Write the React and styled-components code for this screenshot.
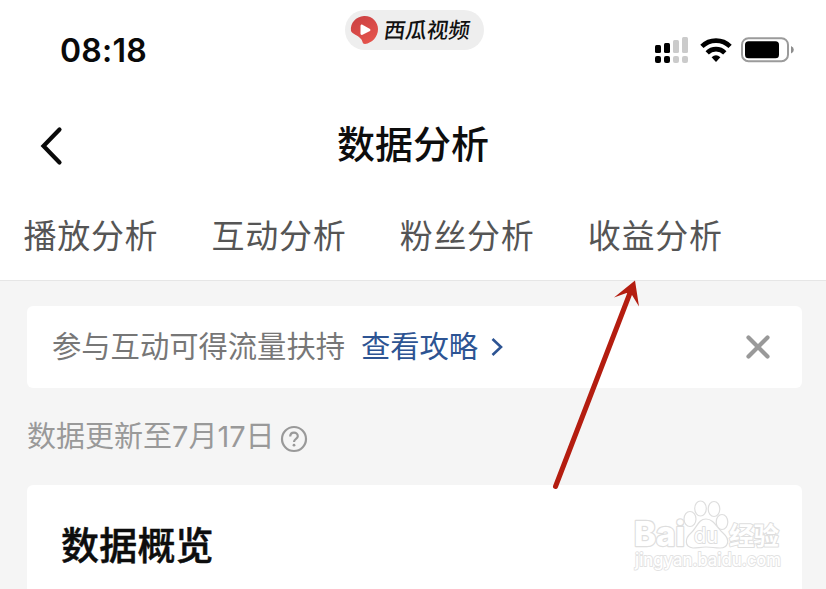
import React from "react";
import styled, { createGlobalStyle } from "styled-components";

const tabs = ["播放分析", "互动分析", "粉丝分析", "收益分析"];

export default function App() {
  return (
    <>
      <GlobalStyle />
      <Page>
        <StatusBar>
          <Time>08:18</Time>
          <AppPill>
            <AppLogo />
            <AppName>西瓜视频</AppName>
          </AppPill>
          <StatusIcons>
            <SignalIcon />
            <WifiIcon />
            <BatteryIcon />
          </StatusIcons>
        </StatusBar>

        <NavBar>
          <BackButton aria-label="返回">
            <svg width="24" height="40" viewBox="0 0 24 40">
              <path d="M20.5 3.5 L4.5 20 L20.5 36.5" fill="none" stroke="#0a0a0a" strokeWidth="4.2" strokeLinecap="round" />
            </svg>
          </BackButton>
          <Title>数据分析</Title>
        </NavBar>

        <Tabs>
          {tabs.map((label) => (
            <Tab key={label}>{label}</Tab>
          ))}
        </Tabs>

        <Content>
          <Notice>
            <NoticeText>参与互动可得流量扶持</NoticeText>
            <NoticeLink>
              查看攻略
              <svg width="12" height="20" viewBox="0 0 12 20">
                <path d="M1.5 2 L10 10 L1.5 18" fill="none" stroke="#2d5493" strokeWidth="2.6" />
              </svg>
            </NoticeLink>
            <CloseButton aria-label="关闭">
              <svg width="26" height="26" viewBox="0 0 26 26">
                <path d="M3.5 3.5 L22.5 22.5 M22.5 3.5 L3.5 22.5" stroke="#999" strokeWidth="4.2" strokeLinecap="round" />
              </svg>
            </CloseButton>
          </Notice>

          <UpdateRow>
            <span>数据更新至7月17日</span>
            <HelpIcon />
          </UpdateRow>

          <Card>
            <CardTitle>数据概览</CardTitle>
          </Card>
        </Content>

        <Arrow />
        <Watermark />
      </Page>
    </>
  );
}

function AppLogo() {
  return (
    <svg width="30" height="30" viewBox="0 0 30 30">
      <defs>
        <linearGradient id="logo" x1="0" y1="0" x2="0.6" y2="1">
          <stop offset="0" stopColor="#c93f42" />
          <stop offset="1" stopColor="#e4534c" />
        </linearGradient>
      </defs>
      <path
        d="M14 1 C22 .5 28 7 28 14 C28 22 22 28 15 29 C12 29 13 26 11 24 C8 20 2 19 1 16 C0 8 6 1.5 14 1 Z"
        fill="url(#logo)"
      />
      <path d="M12 9.5 L20 14 Q21 15 20 16 L12 20 Q10.5 20 10.5 18.5 L10.5 11 Q10.5 9 12 9.5 Z" fill="#fff" />
    </svg>
  );
}

function SignalIcon() {
  return (
    <svg width="34" height="28" viewBox="0 0 34 28">
      <g fill="#000">
        <rect x="0" y="9" width="6" height="8" rx="1.5" />
        <rect x="9" y="7" width="6" height="10" rx="1.5" />
        <rect x="0" y="20" width="6" height="7" rx="2" />
        <rect x="9" y="20" width="6" height="7" rx="2" />
      </g>
      <g fill="#cbcbcb">
        <rect x="18" y="4" width="6" height="13" rx="1.5" />
        <rect x="27" y="1" width="6" height="16" rx="1.5" />
        <rect x="18" y="20" width="6" height="7" rx="2" />
        <rect x="27" y="20" width="6" height="7" rx="2" />
      </g>
    </svg>
  );
}

function WifiIcon() {
  return (
    <svg width="32" height="24" viewBox="0 0 32 24">
      <g fill="none" stroke="#000" strokeWidth="4.6">
        <path d="M1.9 8.4 A20 20 0 0 1 30.1 8.4" />
        <path d="M7.2 14.8 A12.3 12.3 0 0 1 24.8 14.8" />
      </g>
      <path d="M11.6 19.3 Q16 15.4 20.4 19.3 L16 24 Z" fill="#000" />
    </svg>
  );
}

function BatteryIcon() {
  return (
    <svg width="53" height="26" viewBox="0 0 53 26">
      <rect x="1" y="1.2" width="46" height="23" rx="6.5" fill="#fff" stroke="#9b9b9b" strokeWidth="2" />
      <rect x="4" y="4.2" width="34" height="17" rx="3.5" fill="#000" />
      <path d="M50 9 Q52.8 10 52.8 12.8 Q52.8 15.6 50 16.6 Z" fill="#8d8d8d" />
    </svg>
  );
}

function HelpIcon() {
  return (
    <svg width="28" height="28" viewBox="0 0 28 28" fill="none" stroke="#999" strokeWidth="2.2">
      <circle cx="14" cy="14" r="12" />
      <path d="M10.2 11.6 C10.2 6.2 17.8 6.4 17.8 11.2 C17.8 14 14 13.9 14 17" />
      <circle cx="14" cy="20.2" r="1.4" fill="#999" stroke="none" />
    </svg>
  );
}

function Arrow() {
  return (
    <ArrowSvg width="120" height="235" viewBox="0 0 120 235">
      <path d="M15.5 221.5 L90 28" stroke="#b41d10" strokeWidth="5" strokeLinecap="round" />
      <path d="M95 15.5 L99 41.5 L92 30 L86.5 28 L74 32.5 Z" fill="#b41d10" />
    </ArrowSvg>
  );
}

// Outlined paw logo with the site address under it
function Watermark() {
  return (
    <WatermarkSvg width="170" height="80" viewBox="0 0 170 80">
      <g fill="#fff" stroke="#dedede" strokeWidth="1.2">
        <text x="4" y="46" fontSize="34" fontWeight="800" strokeWidth="2.4" textLength="51" lengthAdjust="spacingAndGlyphs">Bai</text>
        <ellipse cx="60" cy="19" rx="6" ry="7.5" />
        <ellipse cx="70.5" cy="8.5" rx="5.8" ry="7.5" />
        <ellipse cx="84" cy="9" rx="5.8" ry="7.5" />
        <ellipse cx="92" cy="22" rx="5.8" ry="7.5" />
        <path d="M76 19 C84 19 87 28 93 33 C101 40 98 48 90 48 C84 48 82 47 76 47 C70 47 68 48 63 48 C54 47 55 38 61 33 C67 28 68 19 76 19 Z" />
        <text x="64" y="42.5" fontSize="22" strokeWidth="2" textLength="24" lengthAdjust="spacingAndGlyphs">du</text>
        <text x="99" y="45" fontSize="25.5" fontWeight="700" strokeWidth="2" textLength="50">经验</text>
        <text x="5" y="66" fontSize="18" fontWeight="500" stroke="#e2e2e2" strokeWidth="1.8" textLength="146" lengthAdjust="spacingAndGlyphs">
          jingyan.baidu.com
        </text>
      </g>
    </WatermarkSvg>
  );
}

const GlobalStyle = createGlobalStyle`
  body {
    margin: 0;
    background: #f5f5f5;
    overflow: hidden;
  }
`;

const Page = styled.div`
  position: relative;
  box-sizing: border-box;
  width: 826px;
  height: 589px;
  overflow: hidden;
  display: flex;
  flex-direction: column;
  background: #fff;
  font-family: Inter, "Noto Sans CJK SC", sans-serif;
`;

const StatusBar = styled.div`
  display: grid;
  grid-template-columns: 345px 139px 1fr;
  height: 100px;
`;

const Time = styled.div`
  padding-left: 60px;
  font-size: 32px;
  line-height: 101px;
  font-weight: 600;
  letter-spacing: 0.2px;
  color: #0a0a0a;
`;

const AppPill = styled.div`
  display: flex;
  align-items: center;
  gap: 4px;
  box-sizing: border-box;
  height: 40px;
  margin-top: 10px;
  padding-left: 5px;
  border-radius: 20px;
  background: #eee;
`;

const AppName = styled.span`
  font-size: 21.5px;
  line-height: 38px;
  font-weight: 500;
  color: #111;
  white-space: nowrap;
  transform: skewX(-8deg);
`;

const StatusIcons = styled.div`
  display: flex;
  align-items: center;
  justify-content: flex-end;
  height: 100px;
  padding-right: 32px;

  svg:nth-child(2) {
    margin: 0 9px 0 11px;
  }
`;

const NavBar = styled.div`
  display: grid;
  grid-template-columns: 1fr auto 1fr;
  align-items: center;
  height: 90px;
`;

const BackButton = styled.button`
  justify-self: start;
  margin-left: 39px;
  padding: 2px 0 0;
  border: none;
  background: none;

  svg {
    display: block;
  }
`;

const Title = styled.h1`
  margin: 0;
  padding-bottom: 3px;
  font-size: 38px;
  line-height: 84px;
  font-weight: 500;
  color: #0d0d0d;
`;

const Tabs = styled.div`
  display: flex;
  gap: 53.3px;
  box-sizing: border-box;
  height: 91px;
  padding-left: 23.5px;
  border-bottom: 1px solid #e6e6e6;
`;

const Tab = styled.div`
  font-size: 33px;
  line-height: 92px;
  font-weight: 400;
  letter-spacing: 0.7px;
  color: #555;
`;

const Content = styled.div`
  flex: 1;
  display: flex;
  flex-direction: column;
  padding: 25px 24px 0 27px;
  background: #f5f5f5;
`;

const Notice = styled.div`
  display: flex;
  align-items: center;
  height: 82px;
  padding: 0 31px 0 25px;
  border-radius: 6px;
  background: #fff;
`;

const NoticeText = styled.span`
  font-size: 29.3px;
  line-height: 80px;
  color: #777;
`;

const NoticeLink = styled.a`
  display: flex;
  align-items: center;
  gap: 13px;
  margin-left: 16px;
  font-size: 29.3px;
  line-height: 80px;
  color: #2d5493;
`;

const CloseButton = styled.button`
  margin-left: auto;
  padding: 0;
  border: none;
  background: none;

  svg {
    display: block;
  }
`;

const UpdateRow = styled.div`
  display: flex;
  align-items: center;
  gap: 5px;
  height: 97px;
  font-size: 29px;
  line-height: 97px;
  color: #999;

  svg {
    margin-top: 4px;
  }
`;

const Card = styled.div`
  flex: 1;
  padding: 24px 0 0 34px;
  border-radius: 6px 6px 0 0;
  background: #fff;
`;

const CardTitle = styled.h2`
  margin: 0;
  font-size: 38px;
  line-height: 72px;
  font-weight: 500;
  letter-spacing: 0.2px;
  color: #0d0d0d;
  -webkit-text-stroke: 0.5px #0d0d0d;
`;

// Pointer drawn over the page
const ArrowSvg = styled.svg`
  position: absolute;
  left: 540px;
  top: 265px;
  fill: none;
`;

const WatermarkSvg = styled.svg`
  position: absolute;
  left: 630px;
  top: 500px;
  overflow: visible;

  text {
    paint-order: stroke;
    stroke-linejoin: round;
  }
`;
